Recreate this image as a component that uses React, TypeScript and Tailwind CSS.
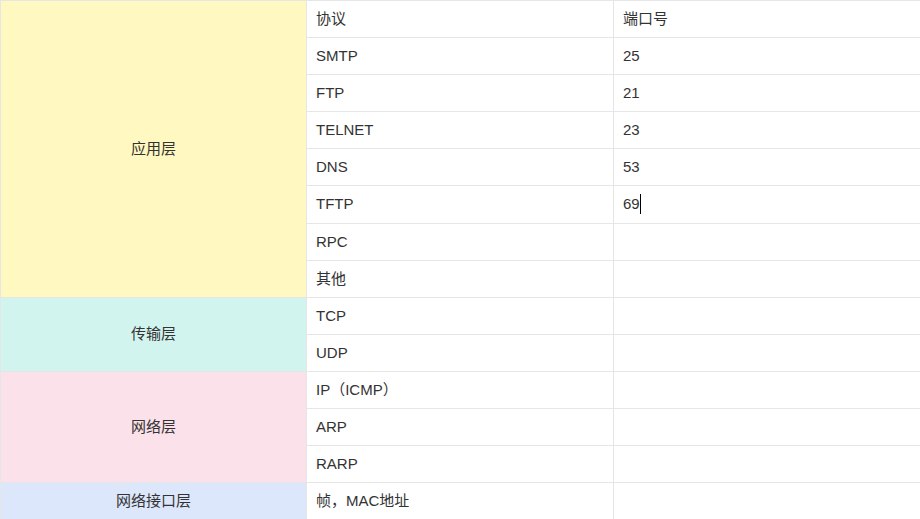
import React from "react";

type Row = { proto: string; port?: string; cursor?: boolean };
type Layer = { name: string; bg: string; rows: Row[] };

const layers: Layer[] = [
    {
        name: "应用层",
        bg: "bg-[#fff8c0]",
        rows: [
            { proto: "协议", port: "端口号" },
            { proto: "SMTP", port: "25" },
            { proto: "FTP", port: "21" },
            { proto: "TELNET", port: "23" },
            { proto: "DNS", port: "53" },
            { proto: "TFTP", port: "69", cursor: true },
            { proto: "RPC" },
            { proto: "其他" },
        ],
    },
    {
        name: "传输层",
        bg: "bg-[#d2f4ee]",
        rows: [{ proto: "TCP" }, { proto: "UDP" }],
    },
    {
        name: "网络层",
        bg: "bg-[#fbe1ea]",
        rows: [{ proto: "IP（ICMP）" }, { proto: "ARP" }, { proto: "RARP" }],
    },
    {
        name: "网络接口层",
        bg: "bg-[#dde7fb]",
        rows: [{ proto: "帧，MAC地址" }],
    },
];

export default function App() {
    return (
        <div className="w-[920px] h-[519px] overflow-hidden bg-white text-[15px] text-[#333] [font-family:'Liberation_Sans','Noto_Sans_CJK_SC',sans-serif]">
            <table className="w-[920px] table-fixed border-collapse">
                <colgroup>
                    <col className="w-[306px]" />
                    <col className="w-[307px]" />
                    <col className="w-[307px]" />
                </colgroup>
                <tbody>
                    {layers.map((layer) =>
                        layer.rows.map((row, i) => (
                            <tr key={layer.name + row.proto} className={row.cursor ? "h-[38px]" : "h-[37px]"}>
                                {i === 0 && (
                                    <td
                                        rowSpan={layer.rows.length}
                                        className={`border border-[#e6e6e6] text-center align-middle ${layer.bg}`}
                                    >
                                        {layer.name}
                                    </td>
                                )}
                                <td className="border border-[#e6e6e6] px-[9px] align-middle">{row.proto}</td>
                                <td className="border border-[#e6e6e6] px-[9px] align-middle">
                                    {row.port}
                                    {row.cursor && <span className="inline-block w-px h-[20px] bg-black align-middle -mt-[2px]" />}
                                </td>
                            </tr>
                        ))
                    )}
                </tbody>
            </table>
        </div>
    );
}
